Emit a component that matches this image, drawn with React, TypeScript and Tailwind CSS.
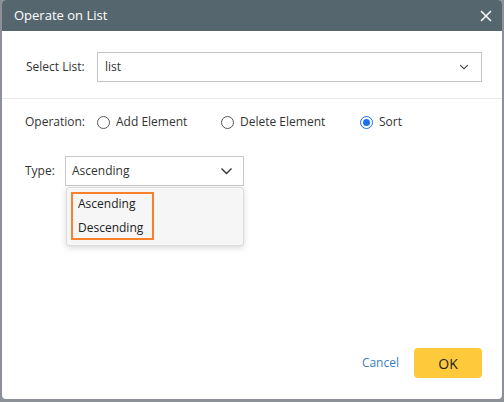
import React from 'react';

function Chevron({ className }: { className?: string }) {
  return (
    <svg className={className} viewBox="0 0 12 8" fill="none" stroke="currentColor" strokeWidth="1.4">
      <path d="M1 1.5l5 5 5-5" />
    </svg>
  );
}

function Radio({ checked, label }: { checked?: boolean; label: string }) {
  return (
    <label className="flex items-center gap-[6px]">
      <span
        className={`flex h-[13px] w-[13px] items-center justify-center rounded-full border ${
          checked ? 'border-[#1a73e8]' : 'border-[#555]'
        }`}
      >
        {checked ? <span className="h-[7px] w-[7px] rounded-full bg-[#1a73e8]" /> : null}
      </span>
      <span>{label}</span>
    </label>
  );
}

export default function App() {
  return (
    <div
      className="h-[402px] w-[504px] overflow-hidden bg-[#8b9196] text-[12px] text-[#333]"
      style={{ fontFamily: '"Open Sans", "Noto Sans", sans-serif' }}
    >
      <div className="ml-[2px] flex h-[399px] w-[500px] flex-col overflow-hidden rounded-[4px] bg-white">
        <div className="flex h-[31px] items-center justify-between bg-[#56666f] pl-[12px] pr-[10px] text-white">
          <span className="text-[13px]">Operate on List</span>
          <svg className="h-[12px] w-[12px]" viewBox="0 0 12 12" stroke="white" strokeWidth="1.5">
            <path d="M1 1l10 10M11 1L1 11" />
          </svg>
        </div>

        <div className="flex items-center pl-[24px] pr-[20px] pt-[21px] pb-[16px]">
          <span className="w-[71px]">Select List:</span>
          <div className="flex h-[30px] flex-1 items-center justify-between border border-[#c4c4c4] pl-[7px] pr-[12px]">
            <span>list</span>
            <Chevron className="h-[6px] w-[10px] text-[#333]" />
          </div>
        </div>

        <div className="border-t border-[#e8e8e8]" />

        <div className="flex items-center pl-[23px] pt-[14px]">
          <span className="w-[72px]">Operation:</span>
          <div className="w-[124px]">
            <Radio label="Add Element" />
          </div>
          <div className="w-[139px]">
            <Radio label="Delete Element" />
          </div>
          <Radio checked label="Sort" />
        </div>

        <div className="flex pl-[23px] pt-[25px]">
          <span className="w-[40px] pt-[6px]">Type:</span>
          <div className="w-[179px]">
            <div className="flex h-[30px] items-center justify-between border border-[#c8c8c8] pl-[6px] pr-[10px]">
              <span>Ascending</span>
              <Chevron className="h-[8px] w-[13px] text-[#333]" />
            </div>
            <div className="ml-[1px] mt-[1px] h-[59px] rounded-[3px] border border-[#dcdcdc] bg-[#f6f6f6] px-[4px] pt-[4px] shadow-[0_2px_6px_rgba(0,0,0,0.15)]">
              <div className="h-[48px] w-[83px] border-2 border-[#f7802b] pl-[5px] text-[#222]">
                <div className="-mt-[2px] leading-[24px]">
                  <div>Ascending</div>
                  <div>Descending</div>
                </div>
              </div>
            </div>
          </div>
        </div>

        <div className="mt-auto flex items-center justify-end gap-[15px] pb-[21px] pr-[20px]">
          <span className="text-[#3b7dc4]">Cancel</span>
          <div className="flex h-[30px] w-[68px] items-center justify-center rounded-[4px] bg-[#ffc93c] text-[14px] text-[#222]">
            OK
          </div>
        </div>
      </div>
    </div>
  );
}
